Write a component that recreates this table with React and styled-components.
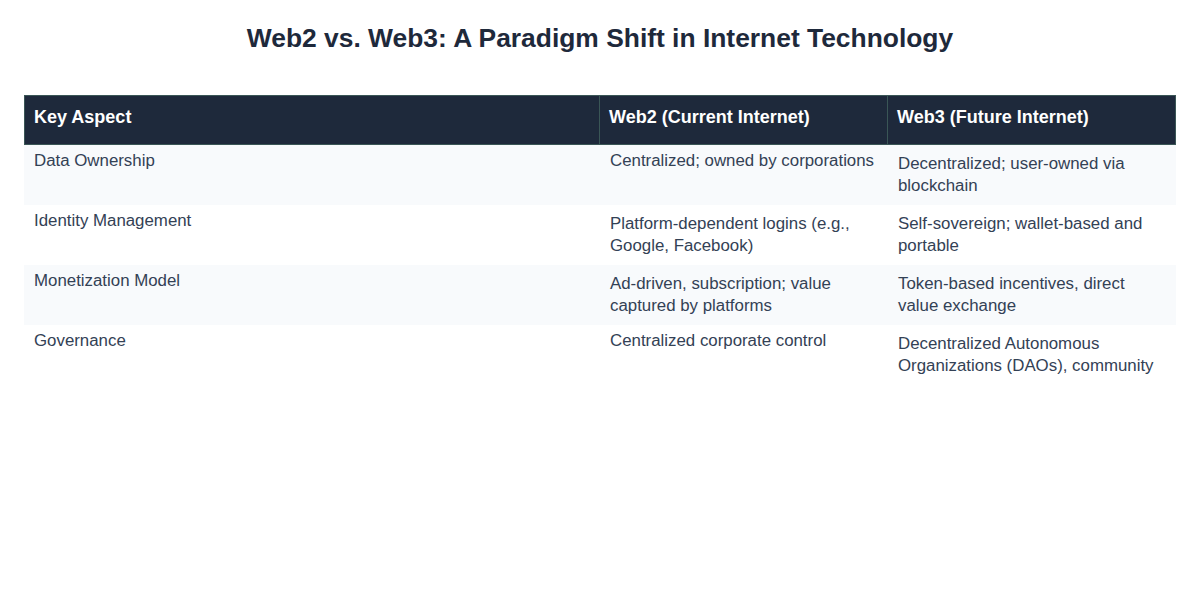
import React from "react";
import styled, { createGlobalStyle } from "styled-components";

const Global = createGlobalStyle`
  html, body { margin: 0; padding: 0; background: #ffffff; }
  body { font-family: "Liberation Sans", Arial, sans-serif; }
`;

const Page = styled.main`
  padding: 23px 24px 24px;
  display: flex;
  flex-direction: column;
  gap: 41px;
`;

const Title = styled.h1`
  margin: 0;
  text-align: center;
  font-size: 26.4px;
  line-height: 31px;
  font-weight: 700;
  color: #1e293b;
`;

const Table = styled.table`
  width: 100%;
  border-collapse: separate;
  border-spacing: 0;
  table-layout: fixed;
  font-size: 16.85px;
`;

const HeadCell = styled.th`
  background: #1e293b;
  color: #ffffff;
  font-weight: 700;
  font-size: 18px;
  text-align: left;
  padding: 10px 9px 16px;
  line-height: 22px;
  border: 1px solid #3a5656;
  & + & { border-left: none; }
`;

const Row = styled.tr`
  background: ${(p) => (p.$striped ? "#f8fafc" : "#ffffff")};
`;

const Cell = styled.td`
  vertical-align: top;
  color: #334155;
  line-height: 22px;
  padding: ${(p) => (p.$single ? "5px 10px 11px" : "8px 10px")};
`;

const rows = [
  ["Data Ownership", "Centralized; owned by corporations", "Decentralized; user-owned via blockchain"],
  ["Identity Management", "Platform-dependent logins (e.g., Google, Facebook)", "Self-sovereign; wallet-based and portable"],
  ["Monetization Model", "Ad-driven, subscription; value captured by platforms", "Token-based incentives, direct value exchange"],
  ["Governance", "Centralized corporate control", "Decentralized Autonomous Organizations (DAOs), community"],
];

const singleLine = [
  [true, true, false],
  [true, false, false],
  [true, false, false],
  [true, true, false],
];

export default function App() {
  return (
    <>
      <Global />
      <Page>
        <Title>Web2 vs. Web3: A Paradigm Shift in Internet Technology</Title>
        <Table>
          <colgroup>
            <col style={{ width: "50%" }} />
            <col style={{ width: "25%" }} />
            <col style={{ width: "25%" }} />
          </colgroup>
          <thead>
            <tr>
              <HeadCell>Key Aspect</HeadCell>
              <HeadCell>Web2 (Current Internet)</HeadCell>
              <HeadCell>Web3 (Future Internet)</HeadCell>
            </tr>
          </thead>
          <tbody>
            {rows.map((r, i) => (
              <Row key={r[0]} $striped={i % 2 === 0}>
                {r.map((c, j) => (
                  <Cell key={j} $single={singleLine[i][j]}>
                    {c}
                  </Cell>
                ))}
              </Row>
            ))}
          </tbody>
        </Table>
      </Page>
    </>
  );
}
